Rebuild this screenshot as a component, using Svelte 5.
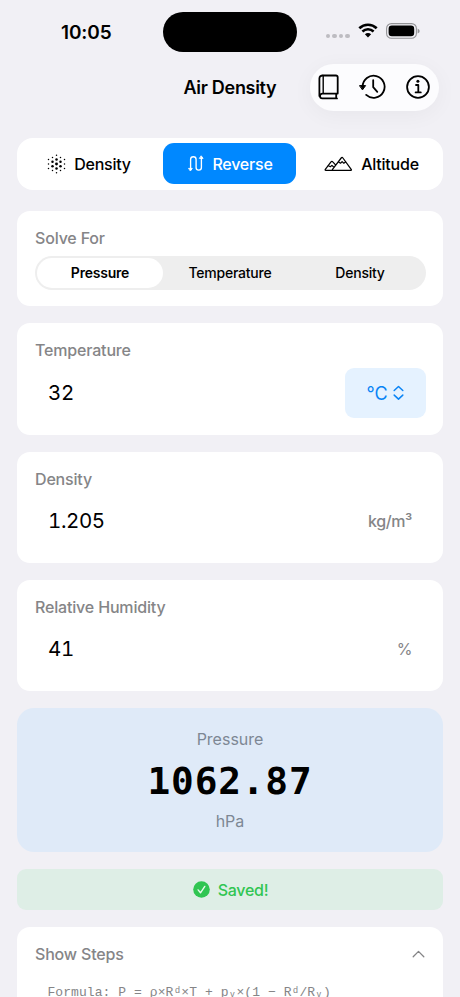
<script>
  const fields = [
    { label: 'Temperature', value: '32', kind: 'temp' },
    { label: 'Density', value: '1.205', unit: 'kg/m³', kind: 'density' },
    { label: 'Relative Humidity', value: '41', unit: '%', kind: 'humidity' }
  ];

  // Hexagonal dot pattern: [x, y, radius]
  const dots = [];
  for (let c = -4; c <= 4; c += 2) {
    const n = [3, 4, 5, 4, 3][(c + 4) / 2];
    for (let i = 0; i < n; i++) {
      const x = (c / 2) * 4;
      const y = (i - (n - 1) / 2) * 4.4;
      const d = Math.hypot(x, y);
      dots.push([x + 9.5, y + 10, d < 1 ? 1.45 : d < 5.5 ? 1.25 : d < 7.5 ? 0.95 : 0.75]);
    }
  }
</script>

<div class="screen">
  <div class="status">
    <span class="time">10:05</span>
    <div class="island"></div>
    <div class="signals">
      <div class="cell"><i></i><i></i><i></i><i></i></div>
      <svg class="wifi" width="20" height="15" viewBox="0 0 20 15">
        <path d="M1.3 5.2C6.3.6 13.7.6 18.7 5.2" fill="none" stroke="#000" stroke-width="2.7" />
        <path d="M4.4 8.5c3.2-3 8-3 11.2 0" fill="none" stroke="#000" stroke-width="2.5" />
        <path d="M6.9 11.3c1.8-1.7 4.4-1.7 6.2 0L10 14.6z" />
      </svg>
      <svg class="battery" width="34" height="16" viewBox="0 0 34 16">
        <rect x=".6" y=".6" width="29.8" height="14.6" rx="4.8" fill="none" stroke="#939396" stroke-width="1.1" />
        <rect x="2.6" y="2.6" width="25.6" height="10.6" rx="3.2" />
        <path d="M31.6 5.4q2.1 1 2.1 2.5t-2.1 2.5z" fill="#939396" />
      </svg>
    </div>
  </div>

  <header>
    <h1>Air Density</h1>
    <div class="tools">
      <svg width="22" height="26" viewBox="0 0 22 26" fill="none" stroke="#000" stroke-width="1.8" stroke-linecap="round" stroke-linejoin="round">
        <path d="M5 1.5h13a1.7 1.7 0 0 1 1.7 1.7v16.4H4.4a2.3 2.3 0 0 0 0 4.8H19M4.8 1.5C2.7 1.5 1.4 2.5 1.4 4.5V22M18.2 19.8v4.3" />
        <path d="M5.2 2v17.3" stroke-width="1.4" />
      </svg>
      <svg width="27" height="26" viewBox="0 0 27 26" fill="none" stroke="#000" stroke-width="1.8" stroke-linecap="round" stroke-linejoin="round">
        <path d="M3.6 12.7A11 11 0 1 1 7.2 20.9" />
        <path d="M14.2 6.2v7l4.1 4.6" />
        <path d="M.8 11.6h5.8l-2.9 4z" fill="#000" stroke-width="1" />
      </svg>
      <svg width="26" height="26" viewBox="0 0 26 26" fill="none" stroke="#000" stroke-width="1.8" stroke-linecap="round" stroke-linejoin="round">
        <circle cx="13" cy="13" r="10.9" />
        <path d="M11 11h2.3v7.3M10.6 18.4h5.2" />
        <circle cx="12.9" cy="7.2" r="1.5" fill="#000" stroke="none" />
      </svg>
    </div>
  </header>

  <nav>
    <div class="tab den">
      <svg width="19" height="20" viewBox="0 0 19 20">
        {#each dots as [x, y, r]}<circle cx={x} cy={y} {r} />{/each}
      </svg>
      <span>Density</span>
    </div>
    <div class="tab active">
      <svg width="16" height="17" viewBox="0 0 16 17" fill="none" stroke="#fff" stroke-width="1.35" stroke-linecap="round" stroke-linejoin="round">
        <path d="M2.6 14V4.5a2.75 2.75 0 0 1 5.5 0v8a2.65 2.65 0 0 0 5.3 0V3" />
        <path d="M.9 13.4h3.4l-1.7 2.3zM11.7 3.4h3.4l-1.7-2.3z" fill="#fff" stroke-width=".9" />
      </svg>
      <span>Reverse</span>
    </div>
    <div class="tab alt">
      <svg width="29" height="16" viewBox="0 0 29 16" fill="none" stroke="#000" stroke-width="1.25" stroke-linecap="round" stroke-linejoin="round">
        <path d="M10.3 14.3H1.8q-1.1 0-.5-1L7 5.9q.9-1.1 1.8 0l2.5 2.8M10.3 14.3h16.5q1.1 0 .4-1L18.9 2q-.8-1.1-1.7 0L8.5 13.4q-.6.9.4.9" />
        <path d="M4.4 9.8l2 .9 1.5-1.3 1.5 1.3M14.6 6l1.9 1.2 1.6-1.6 1.7 1.6 1.8-1.2" />
      </svg>
      <span>Altitude</span>
    </div>
  </nav>

  <section class="card solve">
    <div class="label">Solve For</div>
    <div class="segments">
      <div class="seg on">Pressure</div>
      <div class="seg">Temperature</div>
      <div class="seg">Density</div>
    </div>
  </section>

  {#each fields as f}
    <section class="card field {f.kind}">
      <div class="label">{f.label}</div>
      <div class="row">
        <span class="value">{f.value}</span>
        {#if f.unit}
          <span class="unit">{f.unit}</span>
        {:else}
          <div class="picker">
            <span>°C</span>
            <svg width="11" height="16" viewBox="0 0 11 16" fill="none" stroke="#0a84f5" stroke-width="1.5" stroke-linecap="round" stroke-linejoin="round">
              <path d="M1.2 5.5l4.3-4 4.3 4M1.2 10.1l4.3 4 4.3-4" />
            </svg>
          </div>
        {/if}
      </div>
    </section>
  {/each}

  <section class="result">
    <div class="r-name">Pressure</div>
    <div class="r-value">1062.87</div>
    <div class="r-unit">hPa</div>
  </section>

  <section class="saved">
    <svg width="17" height="17" viewBox="0 0 17 17">
      <circle cx="8.5" cy="8.5" r="8.3" fill="#30c552" />
      <path d="M5.1 8.9l2.4 2.9 4.3-6.4" fill="none" stroke="#e9faee" stroke-width="1.4" stroke-linecap="round" stroke-linejoin="round" />
    </svg>
    <span>Saved!</span>
  </section>

  <section class="card steps">
    <div class="steps-head">
      <span class="label">Show Steps</span>
      <svg width="13" height="8" viewBox="0 0 13 8" fill="none" stroke="#848486" stroke-width="1.3" stroke-linecap="round" stroke-linejoin="round">
        <path d="M1.2 6.7l5.3-5.3 5.3 5.3" />
      </svg>
    </div>
    <div class="formula">Formula: P = ρ×Rᵈ×T + pᵥ×(1 − Rᵈ/Rᵥ)</div>
  </section>
</div>

<style>
  :global(body) { margin: 0; background: #f1f0f5; }
  .screen {
    box-sizing: border-box; width: 460px; height: 997px; overflow: hidden;
    background: #f1f0f5; color: #000; font-family: Inter, sans-serif;
    display: flex; flex-direction: column;
  }
  .screen > * { flex-shrink: 0; box-sizing: border-box; }
  svg { display: block; flex-shrink: 0; }
  .status { height: 63px; display: flex; padding: 12px 40px 0 61px; align-items: flex-start; }
  .time { width: 102px; font-size: 19px; line-height: 41px; font-weight: 600; letter-spacing: -.1px; }
  .island { width: 134px; height: 40px; border-radius: 20px; background: #000; }
  .signals { display: flex; padding-top: 11px; margin-left: 29px; }
  .cell { display: flex; gap: 2.4px; padding-top: 11px; width: 32px; box-sizing: border-box; }
  .cell i { width: 4.1px; height: 4.1px; border-radius: 50%; background: #bdbcc1; }
  .battery { margin-left: 8px; }
  header { height: 48px; display: flex; padding-left: 183.5px; margin-right: 21.5px; align-items: center; }
  h1 { margin: 0; width: 126px; font-size: 18px; font-weight: 600; line-height: 24px; padding-top: 1px; letter-spacing: -.3px; white-space: nowrap; }
  .tools {
    width: 129px; height: 47px; border-radius: 24px; background: #fcfcfe; flex-shrink: 0;
    box-shadow: 0 4px 22px rgba(0, 0, 0, .045); box-sizing: border-box; padding: 0 8px;
    display: flex; align-items: center; justify-content: space-between;
  }
  nav { margin: 27px 17px 0; height: 52px; border-radius: 16px; background: #fff; display: flex; align-items: center; padding: 5px 5px 6px; gap: 8px; }
  .tab { height: 41px; width: 133px; box-sizing: border-box; border-radius: 11px; display: flex; align-items: center; justify-content: center; gap: 8px; font-size: 16px; font-weight: 500; letter-spacing: -.22px; }
  .tab.active { background: #0088ff; color: #fff; padding-left: 2px; }
  .tab.den { padding-left: 1px; }
  .tab.alt { padding-left: 2px; }
  .card { margin: 17px 17px 0; background: #fff; border-radius: 13px; padding: 0 17px 0 18px; }
  .label { font-size: 16px; line-height: 20px; color: #858587; font-weight: 450; letter-spacing: -.17px; }
  .solve { height: 95px; margin-top: 21px; padding-top: 17px; }
  .segments { margin-top: 8px; height: 34px; border-radius: 17px; background: #eee; display: flex; padding: 2px 1px 2px 2px; box-sizing: border-box; }
  .seg { flex: 1; border-radius: 15px; font-size: 14px; font-weight: 500; text-align: center; line-height: 30px; letter-spacing: -.22px; }
  .seg.on { background: #fff; font-weight: 600; flex: 0 0 126px; margin-right: 2px; }
  .field { height: 111px; padding-top: 17px; }
  .field.temp { height: 112px; }
  .row { display: flex; align-items: center; justify-content: space-between; height: 50px; margin-top: 8px; padding-left: 13px; }
  .density .row, .humidity .row { margin-top: 7px; padding-right: 14px; }
  .value { font-size: 20.5px; line-height: 24px; padding-bottom: 1px; font-variant-numeric: tabular-nums; letter-spacing: -.4px; }
  .unit { font-size: 16px; color: #858587; font-weight: 500; letter-spacing: -.4px; }
  .humidity .unit { font-weight: 400; }
  .picker { width: 81px; height: 50px; border-radius: 9px; background: #e5f2ff; color: #0a84f5; display: flex; align-items: center; justify-content: center; gap: 5px; font-size: 18px; box-sizing: border-box; padding-right: 1px; }
  .result { margin: 17px 17px 0; height: 144px; border-radius: 17px; background: #dfeaf8; text-align: center; color: #7d8794; font-size: 16px; padding-top: 20px; }
  .r-name { line-height: 22px; }
  .r-value { height: 50px; font: bold 37.8px/52px "DejaVu Sans Mono", monospace; letter-spacing: .8px; color: #000; margin-top: 5px; }
  .r-unit { line-height: 22px; margin-top: 5px; }
  .saved { margin: 17px 17px 0; height: 41px; border-radius: 9px; background: #deeee6; color: #30c552; display: flex; align-items: center; justify-content: center; gap: 8px; padding-left: 1px; font-size: 16px; font-weight: 500; letter-spacing: -.25px; }
  .steps { height: 100px; padding-top: 17px; }
  .steps-head { display: flex; align-items: center; justify-content: space-between; padding-right: 1px; }
  .formula { margin: 20px 0 0 12.5px; font: 13px/18px "Liberation Mono", "DejaVu Sans Mono", monospace; letter-spacing: .07px; color: #858587; white-space: pre; }
</style>
